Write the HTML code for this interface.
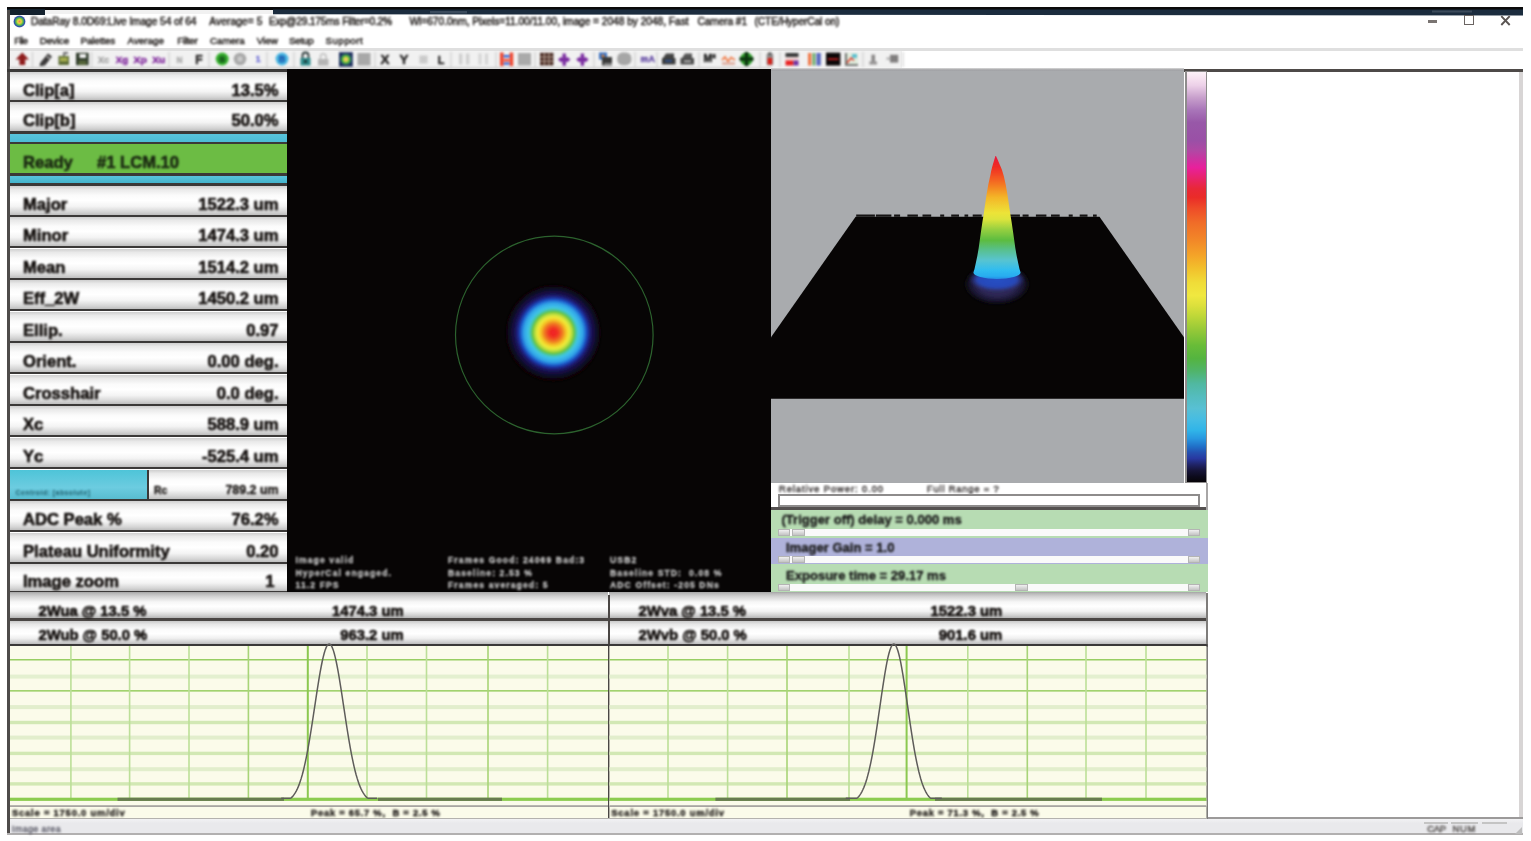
<!DOCTYPE html>
    <html><head><meta charset="utf-8"><title>DataRay</title>
    <style>
    html,body{margin:0;padding:0;background:#fff;}
    body{width:1531px;height:841px;overflow:hidden;position:relative;font-family:"Liberation Sans",sans-serif;color:#111;}
    .a{position:absolute;}
    .row{position:absolute;left:10px;width:277px;height:29px;background:linear-gradient(#cfcfcf 0,#e9e9e9 12%,#fbfbfb 32%,#ffffff 50%,#f4f4f4 70%,#d4d4d4 90%,#bdbdbd 100%);border-bottom:2.6px solid #3b3938;}
    .row .l{position:absolute;left:13px;top:9px;font:bold 16.6px/20px "Liberation Sans",sans-serif;color:#161210;white-space:nowrap;}
    .row .v{position:absolute;right:8.5px;top:9px;font:bold 16.6px/20px "Liberation Sans",sans-serif;color:#161210;white-space:nowrap;}
    .brow{position:absolute;height:24.5px;background:linear-gradient(#c9c9c9 0,#e6e6e6 14%,#fbfbfb 36%,#ffffff 55%,#f0f0f0 75%,#cfcfcf 92%,#bbbbbb 100%);border-bottom:2.6px solid #3b3938;}
    .brow.b1{background:linear-gradient(#a4a4a4 0,#bcbcbc 7%,#d4d4d4 18%,#f6f6f6 38%,#ffffff 55%,#f2f2f2 74%,#d0d0d0 90%,#b4b4b4 100%);border-bottom-width:3px;border-bottom-color:#4a4644}
    .brow span{position:absolute;top:4.5px;font:bold 14.8px/18px "Liberation Sans",sans-serif;color:#161210;white-space:nowrap;}
    .ov{position:absolute;font:bold 8.6px/12.5px "Liberation Sans",sans-serif;color:#bcbcbc;white-space:nowrap;letter-spacing:1.1px;}
    .mn{position:absolute;top:35px;font:9.6px/12px "Liberation Sans",sans-serif;color:#2a2422;white-space:nowrap;}
    .sl{position:absolute;font:bold 13.05px/15px "Liberation Sans",sans-serif;color:#1a1a1a;white-space:nowrap;}
    .sb{position:absolute;left:778px;width:422px;height:7px;background:#fafafa;border-radius:1px;}
    .sb i{position:absolute;top:0;height:7px;background:linear-gradient(#f0f0f0,#c4c4c4);border:0.6px solid #b4b4b4;box-sizing:border-box;}
    .sc{position:absolute;font:bold 9.6px/12px "Liberation Sans",sans-serif;color:#333;white-space:nowrap;top:807px;}
    .tb{position:absolute;}
    #w{position:absolute;left:0;top:0;width:1531px;height:841px;}
    .row span,.brow span,.ov,.sl,.t{filter:blur(0.8px);}
    .row span,.brow span{-webkit-text-stroke:0.6px #0e0a08;color:#0e0a08;}
    .sl{-webkit-text-stroke:0.35px #1a1a1a;}
    .ov{-webkit-text-stroke:0.35px #c4c4c4;}
    </style></head><body><div id="w">
    
<div class="a" style="left:7px;top:7px;width:1516px;height:828px;background:#fff;"></div>
<div class="a" style="left:7px;top:7px;width:1516px;height:3.2px;background:#0b0b0b;"></div>
<div class="a" style="left:7px;top:10px;width:266px;height:4px;background:#f1f1f1;"></div>
<div class="a" style="left:7px;top:9px;width:38px;height:5.5px;background:#14222e;"></div>
<svg class="a" style="left:0;top:0" width="1531" height="20"><polygon points="273,9.5 1523,9.5 1523,15.6 273,14.3" fill="#1b2c3e"/><rect x="430" y="11" width="37" height="2.5" fill="#3b4b5d"/><rect x="1432" y="10.5" width="40" height="2" fill="#4a5868" opacity=".7"/></svg>
<div class="a" style="left:7px;top:10px;width:2.6px;height:825px;background:#4e4b4a;"></div>
<div class="a" style="left:1518.6px;top:71px;width:4.4px;height:764px;background:#d8d5d5;"></div>
<svg class="a" style="left:13px;top:15px" width="13" height="13" viewBox="0 0 13 13"><defs><radialGradient id="ti"><stop offset="0" stop-color="#f08060"/><stop offset=".3" stop-color="#e8d840"/><stop offset=".6" stop-color="#58b848"/><stop offset=".85" stop-color="#2858a8"/><stop offset="1" stop-color="#6a6ab8"/></radialGradient></defs><circle cx="6.5" cy="6.5" r="6" fill="url(#ti)"/></svg>
<div class="a t" style="left:30.9px;top:15.5px;font:10.2px/12px 'Liberation Sans',sans-serif;color:#1e1a18;white-space:pre;letter-spacing:-0.063px;-webkit-text-stroke:0.45px #1e1a18;">DataRay 8.0D69:Live Image 54 of 64</div>
<div class="a t" style="left:209.2px;top:15.5px;font:10.2px/12px 'Liberation Sans',sans-serif;color:#1e1a18;white-space:pre;letter-spacing:0.118px;-webkit-text-stroke:0.45px #1e1a18;">Average= 5</div>
<div class="a t" style="left:269.1px;top:15.5px;font:10.2px/12px 'Liberation Sans',sans-serif;color:#1e1a18;white-space:pre;letter-spacing:-0.183px;-webkit-text-stroke:0.45px #1e1a18;">Exp@29.175ms Filter=0.2%</div>
<div class="a t" style="left:409.5px;top:15.5px;font:10.2px/12px 'Liberation Sans',sans-serif;color:#1e1a18;white-space:pre;letter-spacing:-0.031px;-webkit-text-stroke:0.45px #1e1a18;">Wl=670.0nm, Pixels=11.00/11.00, image = 2048 by 2048, Fast</div>
<div class="a t" style="left:697.5px;top:15.5px;font:10.2px/12px 'Liberation Sans',sans-serif;color:#1e1a18;white-space:pre;letter-spacing:-0.101px;-webkit-text-stroke:0.45px #1e1a18;">Camera #1</div>
<div class="a t" style="left:754.6px;top:15.5px;font:10.2px/12px 'Liberation Sans',sans-serif;color:#1e1a18;white-space:pre;letter-spacing:-0.113px;-webkit-text-stroke:0.45px #1e1a18;">(CTE/HyperCal on)</div>
<div class="a" style="left:1428px;top:20px;width:8.7px;height:2.6px;background:#7a7472;"></div>
<div class="a" style="left:1463.6px;top:14.5px;width:8px;height:8.4px;border:1.7px solid #6a6462;box-sizing:content-box;"></div>
<svg class="a" style="left:1500px;top:15px" width="11" height="11"><path d="M1.3 1.2L9.7 10M9.7 1.2L1.3 10" stroke="#5a5452" stroke-width="1.9"/></svg>
<div class="a t" style="left:14.2px;top:35px;font:9.8px/12px 'Liberation Sans',sans-serif;color:#1e1a18;white-space:pre;letter-spacing:-0.699px;-webkit-text-stroke:0.45px #1e1a18;">File</div>
<div class="a t" style="left:39.7px;top:35px;font:9.8px/12px 'Liberation Sans',sans-serif;color:#1e1a18;white-space:pre;letter-spacing:-0.109px;-webkit-text-stroke:0.45px #1e1a18;">Device</div>
<div class="a t" style="left:80.5px;top:35px;font:9.8px/12px 'Liberation Sans',sans-serif;color:#1e1a18;white-space:pre;letter-spacing:-0.113px;-webkit-text-stroke:0.45px #1e1a18;">Palettes</div>
<div class="a t" style="left:127.5px;top:35px;font:9.8px/12px 'Liberation Sans',sans-serif;color:#1e1a18;white-space:pre;letter-spacing:0.025px;-webkit-text-stroke:0.45px #1e1a18;">Average</div>
<div class="a t" style="left:177.3px;top:35px;font:9.8px/12px 'Liberation Sans',sans-serif;color:#1e1a18;white-space:pre;letter-spacing:-0.264px;-webkit-text-stroke:0.45px #1e1a18;">Filter</div>
<div class="a t" style="left:210px;top:35px;font:9.8px/12px 'Liberation Sans',sans-serif;color:#1e1a18;white-space:pre;letter-spacing:-0.043px;-webkit-text-stroke:0.45px #1e1a18;">Camera</div>
<div class="a t" style="left:256.7px;top:35px;font:9.8px/12px 'Liberation Sans',sans-serif;color:#1e1a18;white-space:pre;letter-spacing:0.059px;-webkit-text-stroke:0.45px #1e1a18;">View</div>
<div class="a t" style="left:288.9px;top:35px;font:9.8px/12px 'Liberation Sans',sans-serif;color:#1e1a18;white-space:pre;letter-spacing:-0.222px;-webkit-text-stroke:0.45px #1e1a18;">Setup</div>
<div class="a t" style="left:325.6px;top:35px;font:9.8px/12px 'Liberation Sans',sans-serif;color:#1e1a18;white-space:pre;letter-spacing:0.467px;-webkit-text-stroke:0.45px #1e1a18;">Support</div>
<div class="a" style="left:10px;top:48.3px;width:1513px;height:3.2px;background:#dfdfdf;"></div>
<div class="a" style="left:10px;top:51px;width:892px;height:18px;background:#f1f1f1;"></div>
<svg class="a t" style="left:0;top:48px" width="910" height="22" viewBox="0 48 910 22" font-family="Liberation Sans, sans-serif" font-weight="bold">
<rect x="10" y="67.2" width="761" height="1.8" fill="#cacaca"/>
<rect x="31.9" y="52" width="1.2" height="15" fill="#d0d0d0"/>
<rect x="91.0" y="52" width="1.2" height="15" fill="#d0d0d0"/>
<rect x="168.4" y="52" width="1.2" height="15" fill="#d0d0d0"/>
<rect x="208.4" y="52" width="1.2" height="15" fill="#d0d0d0"/>
<rect x="266.4" y="52" width="1.2" height="15" fill="#d0d0d0"/>
<rect x="293.4" y="52" width="1.2" height="15" fill="#d0d0d0"/>
<rect x="374.4" y="52" width="1.2" height="15" fill="#d0d0d0"/>
<rect x="450.4" y="52" width="1.2" height="15" fill="#d0d0d0"/>
<rect x="495.4" y="52" width="1.2" height="15" fill="#d0d0d0"/>
<rect x="534.4" y="52" width="1.2" height="15" fill="#d0d0d0"/>
<rect x="593.4" y="52" width="1.2" height="15" fill="#d0d0d0"/>
<rect x="634.4" y="52" width="1.2" height="15" fill="#d0d0d0"/>
<rect x="656.4" y="52" width="1.2" height="15" fill="#d0d0d0"/>
<rect x="698.4" y="52" width="1.2" height="15" fill="#d0d0d0"/>
<rect x="759.4" y="52" width="1.2" height="15" fill="#d0d0d0"/>
<rect x="779.4" y="52" width="1.2" height="15" fill="#d0d0d0"/>
<rect x="862.4" y="52" width="1.2" height="15" fill="#d0d0d0"/>
<rect x="902.4" y="52" width="1.2" height="15" fill="#d0d0d0"/>
<path d="M22.3,52.5 L29,59.5 H25.2 V65 H19.4 V59.5 H15.6 Z" fill="#8e1c1c"/>
<path d="M40.5,62.5 L48,53.6 L52,56.6 L45,65.5 Z" fill="#3a3838"/><path d="M39.6,66 L45,65.5 L40.5,62.5Z" fill="#222"/><path d="M47,56.5 L49.5,58.5" stroke="#d8d8d8" stroke-width="1.2"/>
<rect x="58.5" y="56" width="10.5" height="9" fill="#5a6a34"/><rect x="60" y="57.5" width="7.5" height="4" fill="#a8b050"/><path d="M64,56 V53 H68" stroke="#444" stroke-width="1.4" fill="none"/>
<rect x="76" y="52.8" width="12.6" height="12.4" fill="#2e3a2a"/><rect x="79.5" y="54" width="6.5" height="4" fill="#f4f4f4"/><rect x="78.5" y="60.5" width="8" height="4.5" fill="#56663a"/>
<text x="98" y="62.6" font-size="8.6" fill="#a8a8a8" stroke="#a8a8a8" stroke-width="0.55" text-anchor="start" textLength="11" lengthAdjust="spacingAndGlyphs">Xc</text>
<text x="115.8" y="62.6" font-size="8.6" fill="#8a3aa4" stroke="#8a3aa4" stroke-width="0.55" text-anchor="start" textLength="12.4" lengthAdjust="spacingAndGlyphs">Xg</text>
<text x="133.4" y="62.6" font-size="8.6" fill="#8a3aa4" stroke="#8a3aa4" stroke-width="0.55" text-anchor="start" textLength="13.4" lengthAdjust="spacingAndGlyphs">Xp</text>
<text x="152.3" y="62.6" font-size="8.6" fill="#8a3aa4" stroke="#8a3aa4" stroke-width="0.55" text-anchor="start" textLength="13" lengthAdjust="spacingAndGlyphs">Xu</text>
<text x="176.5" y="62.6" font-size="8.4" fill="#b0b0b0" stroke="#b0b0b0" stroke-width="0.55" text-anchor="start" >N</text>
<text x="195.3" y="64.3" font-size="12" fill="#2a2828" stroke="#2a2828" stroke-width="0.55" text-anchor="start" >F</text>
<circle cx="222.2" cy="59" r="6.5" fill="#3cb432"/><circle cx="222.2" cy="59" r="4.6" fill="#2c9a28"/>
<text x="222.2" y="62" font-size="8" fill="#14501a" stroke="#14501a" stroke-width="0.55" text-anchor="middle" >S</text>

<circle cx="240" cy="59" r="6.3" fill="#a8a8a8"/><rect x="237.6" y="56.4" width="4.8" height="5.2" rx="1" fill="#cacaca"/>
<text x="255.8" y="61.9" font-size="8.6" fill="#7c7cd8" stroke="#7c7cd8" stroke-width="0.55" text-anchor="start" >1</text>
<circle cx="282" cy="59" r="6.4" fill="#48b4e0"/>
<text x="282" y="62.4" font-size="8.5" fill="#1c5cb0" stroke="#1c5cb0" stroke-width="0.55" text-anchor="middle" >B</text>
<rect x="300.5" y="58" width="10" height="7.5" fill="#2e8a8a"/><path d="M302.5,58 V55.5 A3,3 0 0 1 308.5,55.5 V58" stroke="#2a3838" stroke-width="1.8" fill="none"/><rect x="304" y="60" width="3" height="3" fill="#1c3c3c"/>
<rect x="318" y="59" width="10.5" height="6.5" fill="#b4b4b4"/><path d="M320.5,59 V56 A2.8,2.8 0 0 1 326,56 V59" stroke="#c0c0c0" stroke-width="1.6" fill="none"/>
<defs><radialGradient id="bi"><stop offset="0" stop-color="#f0a0a0"/><stop offset=".3" stop-color="#e8e040"/><stop offset=".6" stop-color="#40b040"/><stop offset="1" stop-color="#203878"/></radialGradient></defs>
<rect x="339" y="52.2" width="13.8" height="14.4" fill="#1c2c5c"/><circle cx="345.9" cy="59.4" r="6.2" fill="url(#bi)"/>
<rect x="357.5" y="53" width="13" height="12.5" fill="#a8a8a8"/>
<text x="380.6" y="64.4" font-size="13.4" fill="#2e2c2c" stroke="#2e2c2c" stroke-width="0.55" text-anchor="start" >X</text>
<text x="399.6" y="64.4" font-size="13.4" fill="#2e2c2c" stroke="#2e2c2c" stroke-width="0.55" text-anchor="start" >Y</text>
<rect x="419.5" y="55.5" width="8" height="8" fill="#cacaca"/>
<text x="437.8" y="63.8" font-size="10.8" fill="#2a2828" stroke="#2a2828" stroke-width="0.55" text-anchor="start" >L</text>
<rect x="459" y="53.5" width="3.4" height="11" fill="#cfcfcf"/><rect x="466" y="53.5" width="3.4" height="11" fill="#cfcfcf"/>
<rect x="478.5" y="53.5" width="3" height="11" fill="#d4d4d4"/><rect x="485" y="53.5" width="3" height="11" fill="#d4d4d4"/>
<rect x="500" y="52.5" width="3.6" height="13.5" fill="#f04830"/><rect x="509.6" y="52.5" width="3.6" height="13.5" fill="#f04830"/><rect x="503.6" y="55" width="6" height="2.4" fill="#3060d0"/><rect x="503.6" y="59" width="6" height="2.4" fill="#f04830"/><rect x="503.6" y="62.5" width="6" height="2.2" fill="#3060d0"/>
<rect x="518" y="53" width="13" height="12.5" fill="#aaaaaa"/>
<rect x="540" y="52.8" width="13.4" height="12.6" fill="#4a2c24"/><path d="M540,57H553.4M540,61.2H553.4M544.4,52.8V65.4M549,52.8V65.4" stroke="#c8b4a8" stroke-width="0.9"/>
<path d="M557.9000000000001,59.6 L561.0,57.0 L562.5,57.800000000000004 L562.5,53.4 L565.9000000000001,53.4 L565.9000000000001,57.800000000000004 L567.4000000000001,57.0 L570.5,59.6 L567.4000000000001,62.2 L565.9000000000001,61.4 L565.9000000000001,65.8 L562.5,65.8 L562.5,61.4 L561.0,62.2 Z" fill="#7a2ca0"/><path d="M576.1,59.6 L579.1999999999999,57.0 L580.6999999999999,57.800000000000004 L580.6999999999999,53.4 L584.1,53.4 L584.1,57.800000000000004 L585.6,57.0 L588.6999999999999,59.6 L585.6,62.2 L584.1,61.4 L584.1,65.8 L580.6999999999999,65.8 L580.6999999999999,61.4 L579.1999999999999,62.2 Z" fill="#7a2ca0"/>
<rect x="599" y="52.5" width="8" height="7" fill="#3870c0"/><circle cx="603" cy="56" r="1.6" fill="#e08030"/><rect x="602" y="57" width="10" height="8.5" fill="#3a3a3a"/><rect x="604" y="63" width="8" height="2.5" fill="#888"/>
<rect x="617.2" y="52.6" width="14.2" height="12.6" rx="5.5" fill="#a6a6a6"/>
<text x="640.6" y="62.3" font-size="8.8" fill="#6a52a8" stroke="#6a52a8" stroke-width="0.55" text-anchor="start" >mA</text>
<path d="M663,58 L666,53.5 H674 V58 Z" fill="#444"/><rect x="662" y="58" width="13.5" height="6.5" fill="#3a3a3a"/><rect x="665" y="60" width="7" height="1.6" fill="#3058a0"/>
<path d="M682,58 L685,53.5 H692 V58 Z" fill="#555"/><rect x="680.5" y="58" width="13.5" height="6.5" fill="#4a4a4a"/><rect x="684" y="60.5" width="7" height="1.6" fill="#c8c8c8"/>
<text x="703.6" y="62.4" font-size="10.4" fill="#1c1c1c" stroke="#1c1c1c" stroke-width="0.55" text-anchor="start" >M²</text>
<path d="M722,60 L725,57 L728,61.5 L731,57.5 L735,60" stroke="#f08050" stroke-width="1.8" fill="none"/><rect x="722" y="62" width="13" height="3" fill="#e0b4a8"/>
<circle cx="746.5" cy="59" r="6.4" fill="#2c9a28"/><path d="M746.5,52V66M739.5,59H753.5" stroke="#0c3410" stroke-width="3.4"/>
<rect x="766.6" y="53.6" width="6.6" height="11.6" rx="1.2" fill="#8e8a8a"/><rect x="768.2" y="52.4" width="3.2" height="2.4" fill="#555"/><rect x="767.6" y="58" width="4.6" height="6.6" fill="#d82018"/>
<rect x="785.5" y="53" width="13" height="4" fill="#3a3a3a"/><rect x="785.5" y="57.5" width="13" height="3" fill="#f0d0d0"/><rect x="785.5" y="60.5" width="8" height="5" fill="#e82020"/><rect x="793.5" y="60.5" width="5" height="5" fill="#7030a0"/>
<rect x="808" y="53" width="3.4" height="12.5" fill="#f07848"/><rect x="812.6" y="53" width="2.6" height="12.5" fill="#60a860"/><rect x="816.4" y="53" width="4.4" height="12.5" fill="#5868c0"/>
<rect x="826" y="52.6" width="14.4" height="13" fill="#0c0808"/><rect x="828" y="58.4" width="10.4" height="1.6" fill="#d02020"/>
<rect x="845" y="53" width="13" height="12.5" fill="#e0ecdc"/><path d="M846,53 V65 H858" stroke="#555" stroke-width="1.6" fill="none"/><path d="M847,63 L851,58 L854,60.5" stroke="#e03020" stroke-width="1.4" fill="none"/><rect x="852" y="54" width="5" height="4" fill="#60c0d0"/>
<rect x="871.4" y="54.6" width="3.6" height="9.4" fill="#8a8888"/><rect x="869.4" y="61.4" width="7.6" height="3.2" fill="#989696"/>
<rect x="890" y="54.8" width="8.2" height="7.8" fill="#807e7e"/><rect x="886.5" y="57.4" width="4" height="2.4" fill="#b0b0b0"/>
</svg>
<div class="a" style="left:7px;top:69.3px;width:281px;height:2.4px;background:#3b3938;"></div>
<div class="a" style="left:1184px;top:69px;width:339px;height:2.6px;background:#4e4a48;"></div>
<div class="row" style="top:71.6px;height:28px"><span class="l" style="top:9px">Clip[a]</span><span class="v" style="right:8.5px;top:9px">13.5%</span></div>
<div class="row" style="top:102.2px;height:29px"><span class="l" style="top:9px">Clip[b]</span><span class="v" style="right:8.5px;top:9px">50.0%</span></div>
<div class="a" style="left:10px;top:133.4px;width:277px;height:52.6px;background:#3b3938;"></div>
<div class="a" style="left:10px;top:134.4px;width:277px;height:7.4px;background:linear-gradient(#58c4dc,#4cbcd6);"></div>
<div class="a" style="left:10px;top:143.6px;width:277px;height:29.4px;background:#6cbc44;"></div>
<div class="a t" style="left:23px;top:153px;font:bold 16.6px/20px 'Liberation Sans',sans-serif;color:#1c2a14;white-space:pre;-webkit-text-stroke:0.55px #16220e">Ready</div>
<div class="a t" style="left:97px;top:153px;font:bold 16.6px/20px 'Liberation Sans',sans-serif;color:#1c2a14;white-space:pre;-webkit-text-stroke:0.55px #16220e">#1 LCM.10</div>
<div class="a" style="left:10px;top:175.6px;width:277px;height:7.6px;background:linear-gradient(#58c4dc,#44b4cc);"></div>
<div class="row" style="top:185.6px;height:29px"><span class="l" style="top:9px">Major</span><span class="v" style="right:8.5px;top:9px">1522.3 um</span></div>
<div class="row" style="top:217.15px;height:29px"><span class="l" style="top:9px">Minor</span><span class="v" style="right:8.5px;top:9px">1474.3 um</span></div>
<div class="row" style="top:248.7px;height:29px"><span class="l" style="top:9px">Mean</span><span class="v" style="right:8.5px;top:9px">1514.2 um</span></div>
<div class="row" style="top:280.25px;height:29px"><span class="l" style="top:9px">Eff_2W</span><span class="v" style="right:8.5px;top:9px">1450.2 um</span></div>
<div class="row" style="top:311.8px;height:29px"><span class="l" style="top:9px">Ellip.</span><span class="v" style="right:8.5px;top:9px">0.97</span></div>
<div class="row" style="top:343.35px;height:29px"><span class="l" style="top:9px">Orient.</span><span class="v" style="right:8.5px;top:9px">0.00 deg.</span></div>
<div class="row" style="top:374.9px;height:29px"><span class="l" style="top:9px">Crosshair</span><span class="v" style="right:8.5px;top:9px">0.0 deg.</span></div>
<div class="row" style="top:406.45px;height:29px"><span class="l" style="top:9px">Xc</span><span class="v" style="right:8.5px;top:9px">588.9 um</span></div>
<div class="row" style="top:438.0px;height:29px"><span class="l" style="top:9px">Yc</span><span class="v" style="right:8.5px;top:9px">-525.4 um</span></div>
<div class="row" style="top:469.55px"></div>
<div class="a" style="left:10px;top:469.55px;width:137px;height:29px;background:linear-gradient(#4ec4d8,#6ccce0 60%,#58bcd0);border-right:2.4px solid #3b3938;"></div>
<div class="a t" style="left:15.5px;top:488.55px;font:bold 6.8px/8px 'Liberation Sans',sans-serif;color:#1c5a68;white-space:pre;letter-spacing:0.521px;">Centroid: [absolute]</div>
<div class="a t" style="-webkit-text-stroke:0.3px #161210;left:154px;top:484.05px;font:bold 10.5px/13px 'Liberation Sans',sans-serif;color:#161210;">Rc</div>
<div class="a t" style="-webkit-text-stroke:0.3px #161210;right:1252.5px;top:482.55px;font:bold 12.4px/15px 'Liberation Sans',sans-serif;color:#161210;white-space:nowrap">789.2 um</div>
<div class="row" style="top:501.1px;height:29px"><span class="l" style="top:9px">ADC Peak %</span><span class="v" style="right:8.5px;top:9px">76.2%</span></div>
<div class="row" style="top:532.65px;height:29px"><span class="l" style="top:9px">Plateau Uniformity</span><span class="v" style="right:8.5px;top:9px">0.20</span></div>
<div class="row" style="top:564.2px;height:27px"><span class="l" style="top:7.8px">Image zoom</span><span class="v" style="right:12.5px;top:7.8px">1</span></div>
<div class="a" style="left:287px;top:69.3px;width:484px;height:523px;background:#070505;"></div>
<svg class="a" style="left:287px;top:69px" width="484" height="523" viewBox="287 69 484 523">
    <defs><radialGradient id="bm" cx="553.4" cy="332.6" r="47.5" gradientUnits="userSpaceOnUse">
    <stop offset="0" stop-color="#f02028"/><stop offset="0.09" stop-color="#f03020"/><stop offset="0.19" stop-color="#f07820"/><stop offset="0.27" stop-color="#f4c828"/><stop offset="0.33" stop-color="#f0ec38"/><stop offset="0.39" stop-color="#b4dc40"/><stop offset="0.445" stop-color="#5cc040"/><stop offset="0.49" stop-color="#44c8b0"/><stop offset="0.53" stop-color="#40c4e8"/><stop offset="0.62" stop-color="#30a4e8"/><stop offset="0.68" stop-color="#2060d0"/><stop offset="0.735" stop-color="#1c2c98"/><stop offset="0.80" stop-color="#1a1458"/><stop offset="0.90" stop-color="#100a2c"/><stop offset="1" stop-color="#070505"/></radialGradient>
    <filter id="b1"><feGaussianBlur stdDeviation="0.8"/></filter></defs>
    <ellipse cx="553.2" cy="333" rx="48" ry="49" fill="url(#bm)" filter="url(#b1)"/>
    <circle cx="554.3" cy="335" r="98.8" fill="none" stroke="#2c622e" stroke-width="1.2"/>
    </svg>
<div class="ov" style="left:295.5px;top:554.0px;white-space:pre">Image valid</div>
<div class="ov" style="left:295.5px;top:566.5px;white-space:pre">HyperCal engaged.</div>
<div class="ov" style="left:295.5px;top:579.0px;white-space:pre">11.2 FPS</div>
<div class="ov" style="left:448px;top:554.0px;white-space:pre">Frames Good: 24069 Bad:3</div>
<div class="ov" style="left:448px;top:566.5px;white-space:pre">Baseline: 2.53 %</div>
<div class="ov" style="left:448px;top:579.0px;white-space:pre">Frames averaged: 5</div>
<div class="ov" style="left:610px;top:554.0px;white-space:pre">USB2</div>
<div class="ov" style="left:610px;top:566.5px;white-space:pre">Baseline STD:  0.08 %</div>
<div class="ov" style="left:610px;top:579.0px;white-space:pre">ADC Offset: -205 DNs</div>
<div class="a" style="left:771px;top:68px;width:413px;height:414.5px;background:linear-gradient(#dcdcdc 0,#b4b4b6 1.2px,#a2a2a6 2.2px,#a9abae 3.4px);"></div>
<svg class="a" style="left:771px;top:68px" width="413" height="416" viewBox="771 68 413 416">
    <defs>
    <linearGradient id="pk" x1="0" y1="156" x2="0" y2="280" gradientUnits="userSpaceOnUse">
    <stop offset="0" stop-color="#e81840"/><stop offset="0.09" stop-color="#f02c20"/><stop offset="0.21" stop-color="#f46c20"/><stop offset="0.33" stop-color="#f4b428"/><stop offset="0.46" stop-color="#ece438"/><stop offset="0.51" stop-color="#dce43c"/><stop offset="0.59" stop-color="#98d040"/><stop offset="0.68" stop-color="#5cbc40"/><stop offset="0.76" stop-color="#58c090"/><stop offset="0.84" stop-color="#58c4d0"/><stop offset="0.92" stop-color="#30bcf0"/><stop offset="0.97" stop-color="#28acf0"/><stop offset="1" stop-color="#2880e0"/></linearGradient>
    <radialGradient id="gl" cx="0.5" cy="0.5" r="0.5"><stop offset="0" stop-color="#322a5c"/><stop offset="0.55" stop-color="#2e2856"/><stop offset="0.8" stop-color="#1a1632" /><stop offset="1" stop-color="#070505"/></radialGradient>
    <radialGradient id="gl2" cx="0.5" cy="0.5" r="0.5"><stop offset="0" stop-color="#2850c4"/><stop offset="0.7" stop-color="#2848b8"/><stop offset="1" stop-color="#2c3888" stop-opacity="0"/></radialGradient>
    <filter id="b2"><feGaussianBlur stdDeviation="0.7"/></filter>
    <filter id="b3"><feGaussianBlur stdDeviation="1.5"/></filter>
    </defs>
    <polygon points="855.6,216.7 1099.5,216.7 1184,337.3 1184,398.8 771,398.8 771,337.3" fill="#070505"/>
    <path d="M856.2,215.7H1099" stroke="#161414" stroke-width="2.2" stroke-dasharray="18.7 1 15.5 2.7 6 7.3 10.5 4.6 8.7 9 4 7 7.8 5.5 3.7 4.5 9 3"/>
    <ellipse cx="997" cy="284" rx="32.5" ry="20.5" fill="url(#gl)" filter="url(#b3)"/><ellipse cx="997" cy="279.5" rx="28" ry="12" fill="url(#gl2)" filter="url(#b3)"/>
    <path d="M995.4,156.0 L994.2,160.0 L992.7,165.0 L991.4,170.0 L990.1,176.6 L988.2,185.0 L986.5,194.9 L985.0,205.0 L983.8,213.2 L982.4,222.0 L981.0,231.4 L979.8,240.0 L978.7,248.0 L977.3,256.0 L975.6,264.0 L974.5,269.0 L973.4,272.5 A23.6,6.5 0 0 0 1020.6,272.5 L1019.5,269.0 L1018.4,264.0 L1016.7,256.0 L1015.3,248.0 L1014.2,240.0 L1013.0,231.4 L1011.6,222.0 L1010.2,213.2 L1009.0,205.0 L1007.5,194.9 L1005.8,185.0 L1003.9,176.6 L1002.0,170.0 L999.9,165.0 L997.8,160.0 L996.0,156.0Z" fill="url(#pk)" filter="url(#b2)"/>
    </svg>
<div class="a" style="left:1185.3px;top:70.5px;width:22px;height:412px;background:#8e8c8c;"></div>
<div class="a" style="left:1187px;top:71.5px;width:19.2px;height:410px;background:linear-gradient(#fcf2f8 0.00%,#f6e2f0 1.59%,#ecd0e8 3.29%,#c8a0cc 6.22%,#a874b8 9.39%,#9858a8 12.32%,#9a50a6 16.71%,#b048a4 19.15%,#d030a0 21.59%,#e8209c 23.29%,#e82468 25.98%,#e82838 28.41%,#ea2c28 30.61%,#ee4c28 33.29%,#f06c28 36.71%,#f28828 41.10%,#f4a428 44.76%,#f2c02c 47.93%,#f0dc38 51.34%,#f0e840 54.51%,#dce03c 56.95%,#c0d838 59.39%,#94c838 63.05%,#68bc38 66.71%,#54b440 69.88%,#50b468 72.80%,#50b8a0 75.98%,#54bcbc 78.90%,#58c0d4 82.07%,#44bce4 85.00%,#30b4e8 87.44%,#2898e0 89.39%,#2070c8 91.34%,#2450b0 92.80%,#2838a0 94.27%,#202468 95.73%,#161438 97.20%,#0c0a1c 98.66%,#070508 100.00%);"></div>
<div class="a" style="left:771px;top:482.5px;width:436px;height:27px;background:#fff;"></div>
<div class="a t" style="left:779px;top:482.6px;font:9.4px/12px 'Liberation Sans',sans-serif;color:#3a3636;white-space:pre;letter-spacing:0.924px;-webkit-text-stroke:0.45px #3a3636;">Relative Power: 0.00</div>
<div class="a t" style="left:927px;top:482.6px;font:9.4px/12px 'Liberation Sans',sans-serif;color:#3a3636;white-space:pre;letter-spacing:0.804px;-webkit-text-stroke:0.45px #3a3636;">Full Range = ?</div>
<div class="a" style="left:778px;top:494.4px;width:422px;height:12.6px;border:2px solid #8e8c8c;box-sizing:border-box;background:#fff;"></div>
<div class="a" style="left:771px;top:507.4px;width:436px;height:3px;background:#555150;"></div>
<div class="a" style="left:771px;top:510.2px;width:436.7px;height:27.6px;background:#b7dcb3;"></div>
<div class="a" style="left:771px;top:537.8px;width:436.7px;height:26px;background:#afb2da;"></div>
<div class="a" style="left:771px;top:563.8px;width:436.7px;height:28px;background:#b7dcb3;"></div>
<div class="sl" style="left:781.5px;top:512px">(Trigger off) delay = 0.000 ms</div>
<div class="sl" style="left:786px;top:540px">Imager Gain = 1.0</div>
<div class="sl" style="left:786px;top:568px">Exposure time = 29.17 ms</div>
<div class="sb" style="top:528.8px"><i style="left:0;width:12px"></i><i style="left:14px;width:13px"></i><i style="right:0;width:12px"></i></div>
<div class="sb" style="top:556px"><i style="left:0;width:12px"></i><i style="left:14px;width:13px"></i><i style="right:0;width:12px"></i></div>
<div class="sb" style="top:584.2px"><i style="left:0;width:12px"></i><i style="left:236.5px;width:13px"></i><i style="right:0;width:12px"></i></div>
<div class="a" style="left:1206.2px;top:483px;width:1.5px;height:27px;background:#a8a6a6;"></div>
<div class="a" style="left:10px;top:591.6px;width:278px;height:2.4px;background:#6a6866;"></div>
<div class="brow b1" style="left:10px;width:598px;top:592.3px;height:25.4px"><span style="left:28.5px;top:9.3px">2Wua @ 13.5 %</span><span style="right:204.39999999999998px;top:9.3px">1474.3 um</span></div>
<div class="brow " style="left:10px;width:598px;top:620.9px;height:23px"><span style="left:28.5px;top:5.4px">2Wub @ 50.0 %</span><span style="right:204.39999999999998px;top:5.4px">963.2 um</span></div>
<div class="brow b1" style="left:609.4px;width:596.8px;top:592.3px;height:25.4px"><span style="left:29.2px;top:9.3px">2Wva @ 13.5 %</span><span style="right:203.99999999999994px;top:9.3px">1522.3 um</span></div>
<div class="brow " style="left:609.4px;width:596.8px;top:620.9px;height:23px"><span style="left:29.2px;top:5.4px">2Wvb @ 50.0 %</span><span style="right:203.99999999999994px;top:5.4px">901.6 um</span></div>
<div class="a" style="left:607.5px;top:594.5px;width:2.2px;height:225px;background:#4a4644;"></div>
<div class="a" style="left:1206.2px;top:593px;width:1.7px;height:226px;background:#7e7c7a;"></div>
<svg class="a" style="left:0;top:640px" width="1215" height="185" viewBox="0 640 1215 185"><rect x="10" y="644.2" width="1197.6" height="2.6" fill="#3b3938"/><rect x="10" y="646" width="598" height="161" fill="#fbfbea"/>
<rect x="10" y="659.0" width="598" height="1.5" fill="#98ce62"/>
<rect x="10" y="674.6" width="598" height="4" fill="#e4f0d0"/>
<rect x="10" y="690.1" width="598" height="1.5" fill="#98ce62"/>
<rect x="10" y="705.1" width="598" height="4" fill="#e2eecc"/>
<rect x="10" y="720.8" width="598" height="3.4" fill="#d2e8b4"/>
<rect x="10" y="735.6" width="598" height="4" fill="#e2eecc"/>
<rect x="10" y="751.7" width="598" height="3.4" fill="#d2e8b4"/>
<rect x="10" y="767.2" width="598" height="4" fill="#e2eecc"/>
<rect x="10" y="782.2" width="598" height="3.4" fill="#d2e8b4"/>
<rect x="70.1" y="646" width="1.6" height="153.29999999999995" fill="#bcdf98"/>
<rect x="128.8" y="646" width="1.6" height="153.29999999999995" fill="#bcdf98"/>
<rect x="188.2" y="646" width="1.6" height="153.29999999999995" fill="#bcdf98"/>
<rect x="247.6" y="646" width="1.6" height="153.29999999999995" fill="#a8d478"/>
<rect x="306.8" y="646" width="2.0" height="153.29999999999995" fill="#8cc850"/>
<rect x="366.2" y="646" width="1.6" height="153.29999999999995" fill="#bcdf98"/>
<rect x="425.7" y="646" width="1.6" height="153.29999999999995" fill="#bcdf98"/>
<rect x="487.2" y="646" width="1.6" height="153.29999999999995" fill="#a8d478"/>
<rect x="546.8" y="646" width="1.6" height="153.29999999999995" fill="#bcdf98"/>
<rect x="10" y="797.6999999999999" width="598" height="3.2" fill="#8ccc50"/>
<rect x="117.5" y="797.6999999999999" width="166.5" height="3.2" fill="#687c50"/>
<rect x="378" y="797.6999999999999" width="124" height="3.2" fill="#687c50"/>
<polyline points="281.2,798.3 282.2,798.3 283.2,798.3 284.2,798.3 285.2,798.3 286.2,798.3 287.2,798.3 288.2,798.3 289.2,798.3 290.2,798.3 291.2,797.9 292.2,796.9 293.2,795.8 294.2,794.4 295.2,792.9 296.2,791.1 297.2,789.1 298.2,786.9 299.2,784.4 300.2,781.5 301.2,778.4 302.2,775.0 303.2,771.2 304.2,767.1 305.2,762.6 306.2,757.9 307.2,752.8 308.2,747.3 309.2,741.6 310.2,735.7 311.2,729.5 312.2,723.1 313.2,716.5 314.2,709.9 315.2,703.3 316.2,696.6 317.2,690.1 318.2,683.8 319.2,677.7 320.2,671.9 321.2,666.5 322.2,661.5 323.2,657.1 324.2,653.2 325.2,649.9 326.2,647.4 327.2,645.5 328.2,644.4 329.2,644.0 330.2,644.4 331.2,645.5 332.2,647.4 333.2,649.9 334.2,653.2 335.2,657.1 336.2,661.5 337.2,666.5 338.2,671.9 339.2,677.7 340.2,683.8 341.2,690.1 342.2,696.6 343.2,703.3 344.2,709.9 345.2,716.5 346.2,723.1 347.2,729.5 348.2,735.7 349.2,741.6 350.2,747.3 351.2,752.8 352.2,757.9 353.2,762.6 354.2,767.1 355.2,771.2 356.2,775.0 357.2,778.4 358.2,781.5 359.2,784.4 360.2,786.9 361.2,789.1 362.2,791.1 363.2,792.9 364.2,794.4 365.2,795.8 366.2,796.9 367.2,797.9 368.2,798.3 369.2,798.3 370.2,798.3 371.2,798.3 372.2,798.3 373.2,798.3 374.2,798.3 375.2,798.3 376.2,798.3 377.2,798.3" fill="none" stroke="#5e5c5a" stroke-width="1.5"/>
<rect x="10" y="801" width="598" height="5" fill="#fbfbea"/>
<rect x="10" y="805.2" width="598" height="2.2" fill="#a8a6a2"/>
<rect x="10" y="807" width="598" height="12.2" fill="#fbfbea"/><rect x="609.4" y="646" width="597.0000000000001" height="161" fill="#fbfbea"/>
<rect x="609.4" y="659.0" width="597.0000000000001" height="1.5" fill="#98ce62"/>
<rect x="609.4" y="674.6" width="597.0000000000001" height="4" fill="#e4f0d0"/>
<rect x="609.4" y="690.1" width="597.0000000000001" height="1.5" fill="#98ce62"/>
<rect x="609.4" y="705.1" width="597.0000000000001" height="4" fill="#e2eecc"/>
<rect x="609.4" y="720.8" width="597.0000000000001" height="3.4" fill="#d2e8b4"/>
<rect x="609.4" y="735.6" width="597.0000000000001" height="4" fill="#e2eecc"/>
<rect x="609.4" y="751.7" width="597.0000000000001" height="3.4" fill="#d2e8b4"/>
<rect x="609.4" y="767.2" width="597.0000000000001" height="4" fill="#e2eecc"/>
<rect x="609.4" y="782.2" width="597.0000000000001" height="3.4" fill="#d2e8b4"/>
<rect x="667.2" y="646" width="1.6" height="153.29999999999995" fill="#bcdf98"/>
<rect x="726.8" y="646" width="1.6" height="153.29999999999995" fill="#bcdf98"/>
<rect x="786.2" y="646" width="1.6" height="153.29999999999995" fill="#a8d478"/>
<rect x="848.2" y="646" width="1.6" height="153.29999999999995" fill="#bcdf98"/>
<rect x="905.6" y="646" width="2.0" height="153.29999999999995" fill="#8cc850"/>
<rect x="967.0" y="646" width="1.6" height="153.29999999999995" fill="#bcdf98"/>
<rect x="1026.5" y="646" width="1.6" height="153.29999999999995" fill="#a8d478"/>
<rect x="1085.2" y="646" width="1.6" height="153.29999999999995" fill="#bcdf98"/>
<rect x="1145.2" y="646" width="1.6" height="153.29999999999995" fill="#bcdf98"/>
<rect x="609.4" y="797.6999999999999" width="597.0000000000001" height="3.2" fill="#8ccc50"/>
<rect x="715.4" y="797.6999999999999" width="134.60000000000002" height="3.2" fill="#687c50"/>
<rect x="935" y="797.6999999999999" width="167" height="3.2" fill="#687c50"/>
<polyline points="845.8,798.3 846.8,798.3 847.8,798.3 848.8,798.3 849.8,798.3 850.8,798.3 851.8,798.3 852.8,798.3 853.8,798.3 854.8,798.3 855.8,798.3 856.8,798.3 857.8,797.5 858.8,796.4 859.8,795.1 860.8,793.6 861.8,791.8 862.8,789.8 863.8,787.6 864.8,785.0 865.8,782.2 866.8,779.0 867.8,775.4 868.8,771.5 869.8,767.2 870.8,762.6 871.8,757.6 872.8,752.3 873.8,746.6 874.8,740.6 875.8,734.3 876.8,727.8 877.8,721.1 878.8,714.2 879.8,707.3 880.8,700.4 881.8,693.5 882.8,686.8 883.8,680.3 884.8,674.1 885.8,668.3 886.8,662.9 887.8,658.2 888.8,654.0 889.8,650.5 890.8,647.7 891.8,645.6 892.8,644.4 893.8,644.0 894.8,644.4 895.8,645.6 896.8,647.7 897.8,650.5 898.8,654.0 899.8,658.2 900.8,662.9 901.8,668.3 902.8,674.1 903.8,680.3 904.8,686.8 905.8,693.5 906.8,700.4 907.8,707.3 908.8,714.2 909.8,721.1 910.8,727.8 911.8,734.3 912.8,740.6 913.8,746.6 914.8,752.3 915.8,757.6 916.8,762.6 917.8,767.2 918.8,771.5 919.8,775.4 920.8,779.0 921.8,782.2 922.8,785.0 923.8,787.6 924.8,789.8 925.8,791.8 926.8,793.6 927.8,795.1 928.8,796.4 929.8,797.5 930.8,798.3 931.8,798.3 932.8,798.3 933.8,798.3 934.8,798.3 935.8,798.3 936.8,798.3 937.8,798.3 938.8,798.3 939.8,798.3 940.8,798.3 941.8,798.3" fill="none" stroke="#5e5c5a" stroke-width="1.5"/>
<rect x="609.4" y="801" width="597.0000000000001" height="5" fill="#fbfbea"/>
<rect x="609.4" y="805.2" width="597.0000000000001" height="2.2" fill="#a8a6a2"/>
<rect x="609.4" y="807" width="597.0000000000001" height="12.2" fill="#fbfbea"/></svg><div class="a t" style="left:12px;top:807px;font:bold 9.4px/12px 'Liberation Sans',sans-serif;color:#25211e;white-space:pre;letter-spacing:0.801px;-webkit-text-stroke:0.4px #25211e;">Scale = 1750.0 um/div</div><div class="a t" style="left:311px;top:807px;font:bold 9.4px/12px 'Liberation Sans',sans-serif;color:#25211e;white-space:pre;letter-spacing:0.743px;-webkit-text-stroke:0.4px #25211e;">Peak = 65.7 %,  B = 2.5 %</div><div class="a t" style="left:611.3px;top:807px;font:bold 9.4px/12px 'Liberation Sans',sans-serif;color:#25211e;white-space:pre;letter-spacing:0.801px;-webkit-text-stroke:0.4px #25211e;">Scale = 1750.0 um/div</div><div class="a t" style="left:909.8px;top:807px;font:bold 9.4px/12px 'Liberation Sans',sans-serif;color:#25211e;white-space:pre;letter-spacing:0.743px;-webkit-text-stroke:0.4px #25211e;">Peak = 71.3 %,  B = 2.5 %</div><div class="a" style="left:10px;top:817.6px;width:1197px;height:1.7px;background:#b4b2ae;"></div><div class="a" style="left:1208px;top:817.3px;width:315px;height:2.1px;background:#9c9a9a;"></div><div class="a" style="left:9.6px;top:819.2px;width:1513.4px;height:14px;background:linear-gradient(#f2f2f4,#e9e9ec 30%,#e9e9ec);"></div><div class="a" style="left:7px;top:833px;width:1516px;height:2.4px;background:#b2b0b0;"></div><div class="a t" style="left:12px;top:823.5px;font:8.8px/11px 'Liberation Sans',sans-serif;color:#62626e;white-space:pre;letter-spacing:0.45px;-webkit-text-stroke:0.4px #62626e;">Image area</div><div class="a" style="left:1424px;top:822.4px;width:24px;height:1.2px;background:#c4c4c4;"></div><div class="a" style="left:1450.5px;top:822.4px;width:27px;height:1.2px;background:#c4c4c4;"></div><div class="a" style="left:1481.5px;top:822.4px;width:25px;height:1.2px;background:#c4c4c4;"></div><div class="a t" style="left:1427.3px;top:823.3px;font:9.4px/11px 'Liberation Sans',sans-serif;color:#4a4644;white-space:pre;letter-spacing:-0.327px;-webkit-text-stroke:0.35px #4a4644;">CAP</div><div class="a t" style="left:1452.5px;top:823.3px;font:9.4px/11px 'Liberation Sans',sans-serif;color:#4a4644;white-space:pre;letter-spacing:0.714px;-webkit-text-stroke:0.35px #4a4644;">NUM</div><svg class="a" style="left:1514px;top:826px" width="8" height="8"><path d="M8,1 L1,8 H8Z" fill="#bdbdbd"/></svg>
</div></body></html>
